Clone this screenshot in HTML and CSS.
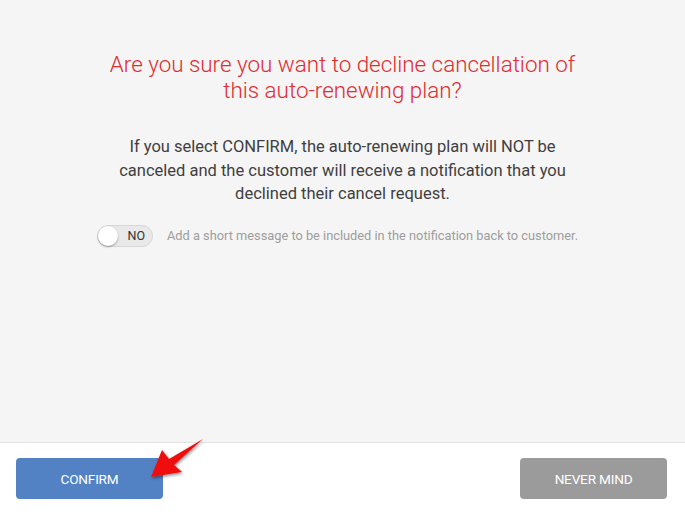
FILE: index.html
```html
<!DOCTYPE html>
<html>
<head>
<meta charset="utf-8">
<link rel="stylesheet" href="styles.css">
</head>
<body>
<div class="page">
  <main class="content">
    <h1 class="title">Are you sure you want to decline cancellation of<br>this auto-renewing plan?</h1>
    <p class="message">If you select CONFIRM, the auto-renewing plan will NOT be<br>canceled and the customer will receive a notification that you<br>declined their cancel request.</p>
    <div class="option-row">
      <div class="toggle"><span class="knob"></span><span class="toggle-label">NO</span></div>
      <span class="hint">Add a short message to be included in the notification back to customer.</span>
    </div>
  </main>
  <footer class="footer">
    <button class="btn btn-primary">CONFIRM</button>
    <button class="btn btn-secondary">NEVER MIND</button>
  </footer>
  <svg class="arrow" width="70" height="50" viewBox="140 432 70 50">
    <defs>
      <filter id="sh" x="-30%" y="-30%" width="160%" height="160%">
        <feDropShadow dx="1" dy="1.5" stdDeviation="1.5" flood-color="#000" flood-opacity="0.45"/>
      </filter>
    </defs>
    <polygon points="151,477 162,450 169,459 203,439 174,465 182,472" fill="#f01010" filter="url(#sh)"/>
  </svg>
</div>
</body>
</html>
```
FILE: styles.css
```css
* { box-sizing: border-box; }
html, body { margin: 0; padding: 0; }
body {
  font-family: Roboto, "Liberation Sans", sans-serif;
  background: #f5f5f5;
}
.page {
  position: relative;
  width: 685px;
  height: 512px;
  display: flex;
  flex-direction: column;
}
.content {
  flex: 1;
  background: #f5f5f5;
  padding-top: 51px;
  display: flex;
  flex-direction: column;
  align-items: center;
}
.title {
  margin: 0;
  font-size: 22.4px;
  line-height: 26px;
  font-weight: 300;
  color: #e02b2f;
  text-align: center;
}
.message {
  margin: 32px 0 0;
  font-size: 16.5px;
  line-height: 23.5px;
  font-weight: 400;
  color: #3f3f3f;
  text-align: center;
}
.option-row {
  margin-top: 19px;
  display: flex;
  align-items: center;
  gap: 14px;
  margin-left: -10px;
}
.toggle {
  position: relative;
  width: 56px;
  height: 22px;
  border-radius: 11px;
  background: #e9e9e9;
  border: 1px solid #d6d6d6;
  display: flex;
  align-items: center;
  justify-content: flex-end;
  padding-right: 7px;
}
.knob {
  position: absolute;
  left: 0px;
  top: 0px;
  width: 20px;
  height: 20px;
  border-radius: 50%;
  background: #fff;
  box-shadow: 0 1px 2px rgba(0,0,0,0.35);
}
.toggle-label {
  font-size: 12.5px;
  color: #333;
  font-weight: 400;
}
.hint {
  font-size: 12.8px;
  color: #9d9d9d;
  font-weight: 400;
}
.footer {
  height: 70px;
  background: #fff;
  border-top: 1px solid #e3e3e3;
  display: flex;
  justify-content: space-between;
  align-items: flex-start;
  padding: 15px 18px 0 16px;
}
.btn {
  width: 147px;
  height: 41px;
  border: none;
  border-radius: 4px;
  color: #fff;
  font-family: Roboto, "Liberation Sans", sans-serif;
  font-size: 13.6px;
  font-weight: 400;
  letter-spacing: -0.2px;
}
.btn-primary { background: #5282c4; }
.btn-secondary { background: #9b9b9b; }
.arrow {
  position: absolute;
  left: 140px;
  top: 432px;
}
```
